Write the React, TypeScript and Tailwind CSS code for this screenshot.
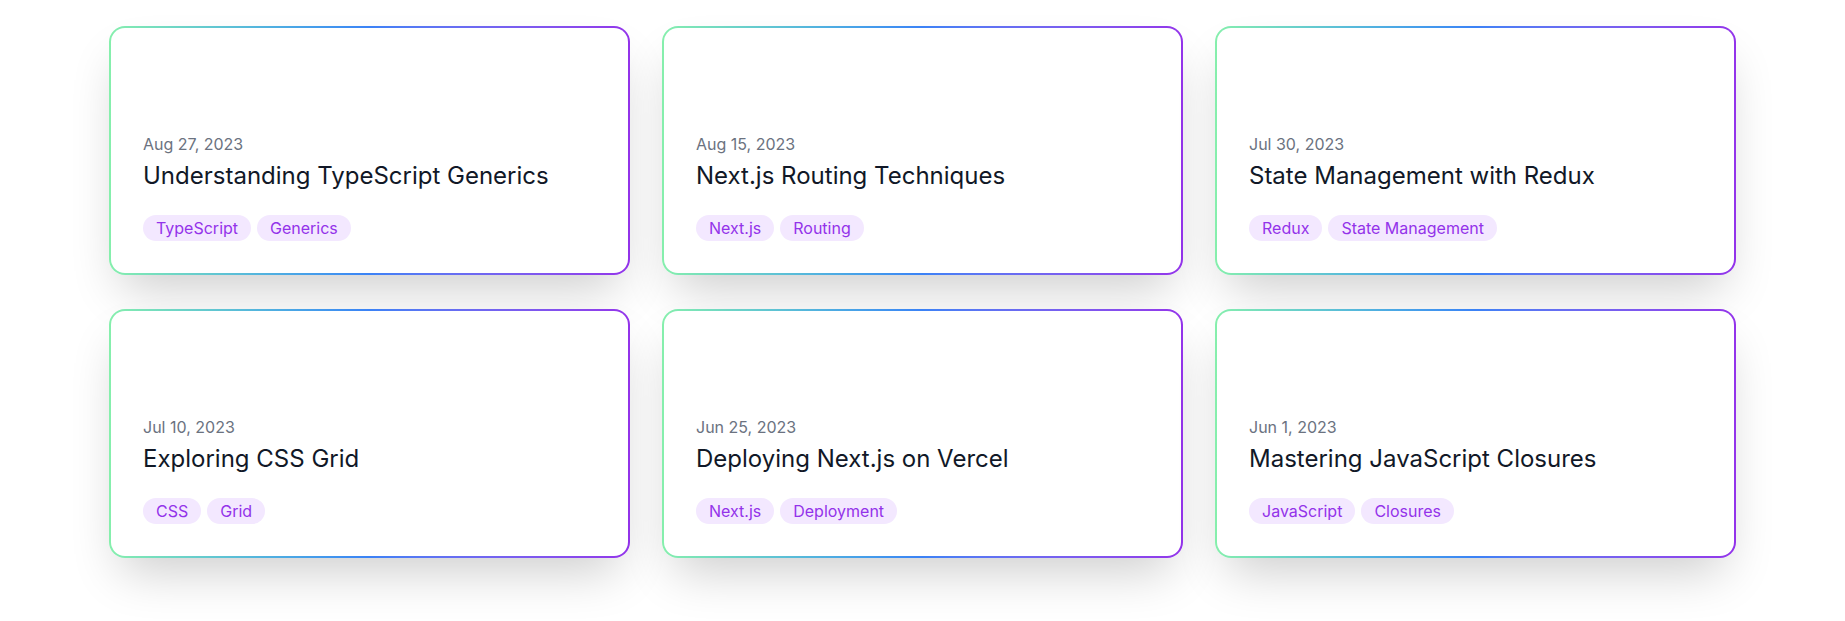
import React from 'react';

interface Post {
  date: string;
  title: string;
  tags: string[];
}

const posts: Post[] = [
  { date: 'Aug 27, 2023', title: 'Understanding TypeScript Generics', tags: ['TypeScript', 'Generics'] },
  { date: 'Aug 15, 2023', title: 'Next.js Routing Techniques', tags: ['Next.js', 'Routing'] },
  { date: 'Jul 30, 2023', title: 'State Management with Redux', tags: ['Redux', 'State Management'] },
  { date: 'Jul 10, 2023', title: 'Exploring CSS Grid', tags: ['CSS', 'Grid'] },
  { date: 'Jun 25, 2023', title: 'Deploying Next.js on Vercel', tags: ['Next.js', 'Deployment'] },
  { date: 'Jun 1, 2023', title: 'Mastering JavaScript Closures', tags: ['JavaScript', 'Closures'] },
];

function PostCard({ post }: { post: Post }) {
  return (
    <div className="rounded-2xl p-[2px] bg-gradient-to-r from-[#86efac] via-[#3b82f6] to-[#9333ea] shadow-[0_25px_50px_-12px_rgba(0,0,0,0.2)]">
      <div className="h-[245px] rounded-[14px] bg-white p-8 flex flex-col justify-end">
        <p className="text-base leading-6 text-[#6b7280]">{post.date}</p>
        <h2 className="mt-1 text-2xl leading-8 text-[#111827]">{post.title}</h2>
        <div className="mt-[23px] flex gap-1.5">
          {post.tags.map((tag) => (
            <span
              key={tag}
              className="rounded-full bg-[#f3e8ff] px-[13px] py-px text-base leading-6 text-[#9333ea]"
            >
              {tag}
            </span>
          ))}
        </div>
      </div>
    </div>
  );
}

export default function App() {
  return (
    <div className="min-h-screen bg-white font-['Inter',sans-serif]">
      <div className="px-[109px] pt-[26px] pb-16 grid grid-cols-3 gap-x-8 gap-y-[34px]">
        {posts.map((post) => (
          <PostCard key={post.title} post={post} />
        ))}
      </div>
    </div>
  );
}
